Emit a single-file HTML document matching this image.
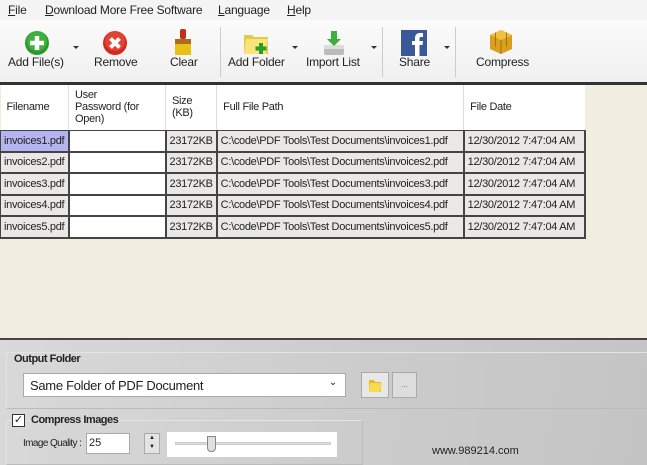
<!DOCTYPE html>
<html><head><style>
*{box-sizing:border-box;margin:0;padding:0}
body{width:647px;height:465px;overflow:hidden;font-family:"Liberation Sans",sans-serif;font-size:12px;color:#222;background:#f3f3f3;position:relative}
.menu{position:absolute;top:0;left:0;width:647px;height:20px;background:#f4f4f4}
.menu span{position:absolute;top:3px;font-size:12px;letter-spacing:-0.2px}
.tb{position:absolute;top:20px;left:0;width:647px;height:62px;background:linear-gradient(#fbfbfb,#f0f0f0)}
.btn{position:absolute;top:55px;font-size:12px;letter-spacing:-0.2px;white-space:nowrap}
.ico{position:absolute}
.arr{position:absolute;top:46px;width:0;height:0;border-left:3px solid transparent;border-right:3px solid transparent;border-top:3px solid #333}
.sep{position:absolute;top:27px;width:1px;height:50px;background:#ccc}
.grid{position:absolute;top:82px;left:0;width:647px;height:258px;background:#f1ede0;border-top:3px solid #333;border-bottom:2px solid #444}
table{position:absolute;top:0;left:0;border-collapse:collapse;font-size:11px;letter-spacing:-0.3px}
td{height:21.5px;border:1px solid #444;border-width:1px 2px 2px 1px;background:#e9e8e6;padding:0 3px;white-space:nowrap}
th{height:45px;background:#fff;font-weight:normal;text-align:left;padding:0 6px;border-right:1px solid #ddd;vertical-align:middle;font-size:11px}
.bot{position:absolute;top:340px;left:0;width:647px;height:125px;background:linear-gradient(100deg,#d9d9d9,#cbcbcb 60%,#c4c4c4)}
.grp{position:absolute;border:1px solid #e4e4e4;border-right-color:#bbb;border-bottom-color:#bbb}
</style></head><body>
<div class="menu">
<span style="left:8px"><u>F</u>ile</span>
<span style="left:45px"><u>D</u>ownload More Free Software</span>
<span style="left:218px"><u>L</u>anguage</span>
<span style="left:287px"><u>H</u>elp</span>
</div>
<div class="tb"></div>
<svg class="ico" style="left:24px;top:30px" width="26" height="26"><circle cx="13" cy="13" r="12" fill="#2a9a2a"/><circle cx="13" cy="11" r="10" fill="#4cc04c" opacity=".6"/><path d="M13 6v14M6 13h14" stroke="#fff" stroke-width="4.5"/></svg>
<svg class="ico" style="left:102px;top:30px" width="26" height="26"><circle cx="13" cy="13" r="12" fill="#d42a1e"/><circle cx="13" cy="11" r="10" fill="#f05a48" opacity=".5"/><path d="M8.5 8.5l9 9M17.5 8.5l-9 9" stroke="#fff" stroke-width="4"/></svg>
<svg class="ico" style="left:172px;top:28px" width="22" height="28"><rect x="8" y="1" width="6" height="10" rx="2" fill="#c03018"/><rect x="3" y="11" width="16" height="5" fill="#b06a20"/><rect x="3" y="16" width="16" height="11" fill="#e8c018"/></svg>
<svg class="ico" style="left:243px;top:30px" width="28" height="26"><path d="M1 5h8l2 2h14v17H1z" fill="#e8c84a"/><path d="M3 9h22l-2 15H1z" fill="#f7e47a"/><path d="M18 13v11M12.5 18.5h11" stroke="#2a9a2a" stroke-width="4"/></svg>
<svg class="ico" style="left:321px;top:29px" width="26" height="28"><rect x="3" y="16" width="20" height="10" rx="2" fill="#bbb"/><rect x="3" y="16" width="20" height="4" fill="#ddd"/><path d="M10 2h6v8h4l-7 7-7-7h4z" fill="#3cb03c"/></svg>
<svg class="ico" style="left:401px;top:30px" width="26" height="26"><rect width="26" height="26" fill="#3b5998"/><path d="M14 26V15h-3v-4h3V8c0-3 2-5 5-5h3v4h-2c-1 0-1.5.5-1.5 1.5V11h3.5l-.5 4h-3v11z" fill="#fff"/></svg>
<svg class="ico" style="left:488px;top:28px" width="26" height="28"><path d="M13 2l11 5v14l-11 5-11-5V7z" fill="#d9a020"/><path d="M13 2l11 5-11 5-11-5z" fill="#f0c040"/><path d="M13 12v14M7.5 4.5v14M18.5 4.5v14" stroke="#a87010" stroke-width="1"/></svg>
<div class="btn" style="left:8px">Add File(s)</div>
<div class="arr" style="left:73px"></div>
<div class="btn" style="left:94px">Remove</div>
<div class="btn" style="left:170px">Clear</div>
<div class="sep" style="left:220px"></div>
<div class="btn" style="left:228px">Add Folder</div>
<div class="arr" style="left:292px"></div>
<div class="btn" style="left:306px">Import List</div>
<div class="arr" style="left:371px"></div>
<div class="sep" style="left:382px"></div>
<div class="btn" style="left:399px">Share</div>
<div class="arr" style="left:444px"></div>
<div class="sep" style="left:455px"></div>
<div class="btn" style="left:476px">Compress</div>

<div class="grid">
<table>
<tr><th style="width:68px">Filename</th><th style="width:97px;line-height:12px">User<br>Password (for<br>Open)</th><th style="width:50px;line-height:12px">Size<br>(KB)</th><th style="width:247px">Full File Path</th><th style="width:121px;border-right:none">File Date</th></tr>
<tr><td style="background:#b4b4f0">invoices1.pdf</td><td style="background:#fff"></td><td>23172KB</td><td>C:\code\PDF Tools\Test Documents\invoices1.pdf</td><td>12/30/2012 7:47:04 AM</td></tr>
<tr><td>invoices2.pdf</td><td style="background:#fff"></td><td>23172KB</td><td>C:\code\PDF Tools\Test Documents\invoices2.pdf</td><td>12/30/2012 7:47:04 AM</td></tr>
<tr><td>invoices3.pdf</td><td style="background:#fff"></td><td>23172KB</td><td>C:\code\PDF Tools\Test Documents\invoices3.pdf</td><td>12/30/2012 7:47:04 AM</td></tr>
<tr><td>invoices4.pdf</td><td style="background:#fff"></td><td>23172KB</td><td>C:\code\PDF Tools\Test Documents\invoices4.pdf</td><td>12/30/2012 7:47:04 AM</td></tr>
<tr><td>invoices5.pdf</td><td style="background:#fff"></td><td>23172KB</td><td>C:\code\PDF Tools\Test Documents\invoices5.pdf</td><td>12/30/2012 7:47:04 AM</td></tr>
</table>
</div>

<div class="bot">
<div class="grp" style="left:6px;top:12px;width:645px;height:57px"></div>
<div style="position:absolute;left:14px;top:13px;font-weight:bold;font-size:11px;letter-spacing:-0.5px">Output Folder</div>
<div style="position:absolute;left:23px;top:33px;width:323px;height:24px;background:#fff;border:1px solid #aaa;padding:4px 6px;font-size:13px;letter-spacing:-0.3px">Same Folder of PDF Document<span style="position:absolute;right:8px;top:3px;font-size:10px">&#8964;</span></div>
<div style="position:absolute;left:361px;top:32px;width:28px;height:26px;background:#e8e8e8;border:1px solid #aaa"><svg width="26" height="24"><path d="M7 7h5l1 2h6v10H7z" fill="#e8b820"/><path d="M8 10h12l-2 9H7z" fill="#f8dc50"/></svg></div>
<div style="position:absolute;left:392px;top:32px;width:25px;height:26px;background:#ddd;border:1px solid #aaa;font-size:8px;text-align:center;line-height:24px;color:#777">...</div>
<div class="grp" style="left:6px;top:80px;width:357px;height:45px"></div>
<div style="position:absolute;left:12px;top:74px;width:13px;height:13px;background:#fff;border:1px solid #333;font-size:11px;line-height:11px;text-align:center">&#10003;</div>
<div style="position:absolute;left:31px;top:74px;font-weight:bold;font-size:11px;letter-spacing:-0.5px">Compress Images</div>
<div style="position:absolute;left:23px;top:98px;font-size:10px;letter-spacing:-0.6px;white-space:nowrap">Image Quality :</div>
<div style="position:absolute;left:86px;top:93px;width:44px;height:21px;background:#fff;border:1px solid #aaa;font-size:11px;padding:3px 2px">25</div>
<div style="position:absolute;left:144px;top:93px;width:16px;height:21px;background:#e4e4e4;border:1px solid #aaa;font-size:6px;text-align:center;line-height:9px">▲<br>▼</div>
<div style="position:absolute;left:167px;top:92px;width:170px;height:25px;background:#fff">
<div style="position:absolute;left:8px;top:10px;width:156px;height:3px;background:#ddd;border:1px solid #ccc"></div>
<div style="position:absolute;left:40px;top:4px;width:9px;height:16px;background:#e0e0e0;border:1px solid #888;border-radius:0 0 4px 4px"></div>
</div>
<div style="position:absolute;left:432px;top:105px;font-size:11px;color:#222">www.989214.com</div>
</div>
</body></html>
